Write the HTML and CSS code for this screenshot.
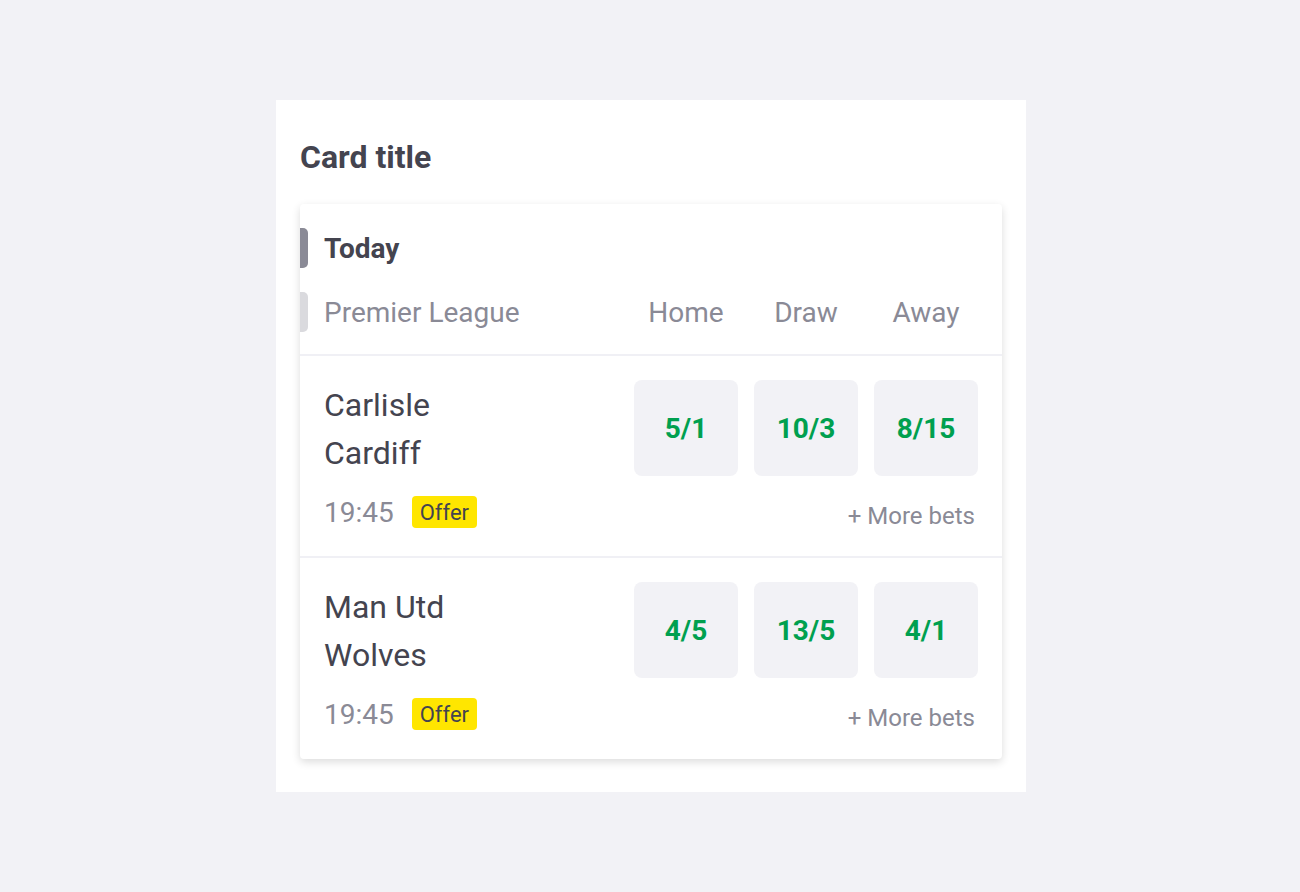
FILE: index.html
```html
<!DOCTYPE html>
<html>
<head>
<meta charset="utf-8">
<link rel="stylesheet" href="styles.css">
</head>
<body>
<div class="page">
  <div class="card">
    <h1 class="card-title">Card title</h1>
    <div class="panel">
      <div class="panel-head">
        <div class="head-row">
          <span class="marker marker-dark"></span>
          <span class="today">Today</span>
        </div>
        <div class="head-row">
          <span class="marker marker-light"></span>
          <span class="league">Premier League</span>
          <div class="cols">
            <span class="col">Home</span>
            <span class="col">Draw</span>
            <span class="col">Away</span>
          </div>
        </div>
      </div>
      <div class="event">
        <div class="event-main">
          <div class="teams">
            <div class="team">Carlisle</div>
            <div class="team">Cardiff</div>
          </div>
          <div class="odds">
            <button class="odd">5/1</button>
            <button class="odd">10/3</button>
            <button class="odd">8/15</button>
          </div>
        </div>
        <div class="event-foot">
          <div class="meta">
            <span class="time">19:45</span>
            <span class="offer">Offer</span>
          </div>
          <span class="more">+ More bets</span>
        </div>
      </div>
      <div class="event">
        <div class="event-main">
          <div class="teams">
            <div class="team">Man Utd</div>
            <div class="team">Wolves</div>
          </div>
          <div class="odds">
            <button class="odd">4/5</button>
            <button class="odd">13/5</button>
            <button class="odd">4/1</button>
          </div>
        </div>
        <div class="event-foot">
          <div class="meta">
            <span class="time">19:45</span>
            <span class="offer">Offer</span>
          </div>
          <span class="more">+ More bets</span>
        </div>
      </div>
    </div>
  </div>
</div>
</body>
</html>
```

FILE: styles.css
```css
* { box-sizing: border-box; }
html, body {
  margin: 0;
  padding: 0;
  background: #f2f2f6;
  font-family: Roboto, "Liberation Sans", Arial, sans-serif;
  color: #44444f;
}
.page {
  height: 892px;
  display: flex;
  align-items: center;
  justify-content: center;
  padding-left: 2px;
}
.card {
  width: 750px;
  height: 692px;
  background: #ffffff;
  padding: 37px 24px 32px 24px;
}
.card-title {
  margin: 0 0 27px 0;
  font-size: 32px;
  line-height: 40px;
  font-weight: 700;
  color: #44444f;
}
.panel {
  background: #fff;
  border-radius: 4px;
  box-shadow: 0 3px 9px rgba(0, 0, 0, 0.14);
}
.panel-head {
  padding: 24px 0 22px 0;
  display: flex;
  flex-direction: column;
  gap: 24px;
  border-bottom: 2px solid #f0f0f5;
}
.head-row {
  height: 40px;
  display: flex;
  align-items: center;
  padding-right: 24px;
}
.marker {
  width: 8px;
  height: 40px;
  border-radius: 0 5px 5px 0;
  margin-right: 16px;
  flex: none;
}
.marker-dark { background: #8a8a96; }
.marker-light { background: #dadade; }
.today {
  font-size: 28px;
  font-weight: 700;
  color: #44444f;
}
.league {
  font-size: 28px;
  color: #8a8a96;
  flex: 1;
}
.cols {
  display: flex;
  gap: 16px;
}
.col {
  width: 104px;
  text-align: center;
  font-size: 28px;
  color: #8a8a96;
}
.event {
  padding: 24px 24px 24px 24px;
  border-bottom: 2px solid #f0f0f5;
}
.event:last-child {
  border-bottom: none;
  padding-bottom: 25px;
}
.event-main {
  display: flex;
  align-items: flex-start;
  justify-content: space-between;
  height: 96px;
}
.teams {
  padding-top: 1px;
}
.team {
  font-size: 32px;
  line-height: 48px;
  color: #44444f;
}
.odds {
  display: flex;
  gap: 16px;
}
.odd {
  width: 104px;
  height: 96px;
  border: none;
  border-radius: 8px;
  background: #f2f2f6;
  font-family: Roboto, "Liberation Sans", Arial, sans-serif;
  font-size: 28px;
  font-weight: 700;
  color: #00a04f;
  padding: 0;
}
.event-foot {
  margin-top: 16px;
  height: 40px;
  display: flex;
  align-items: center;
  justify-content: space-between;
}
.meta {
  display: flex;
  align-items: center;
  gap: 18px;
}
.time {
  font-size: 28px;
  color: #8a8a96;
}
.offer {
  background: #ffe600;
  border-radius: 4px;
  height: 32px;
  line-height: 33px;
  padding: 0 8px;
  font-size: 22px;
  color: #44444f;
}
.more {
  font-size: 24px;
  color: #8a8a96;
  margin-right: 3px;
  padding-top: 8px;
}
```
